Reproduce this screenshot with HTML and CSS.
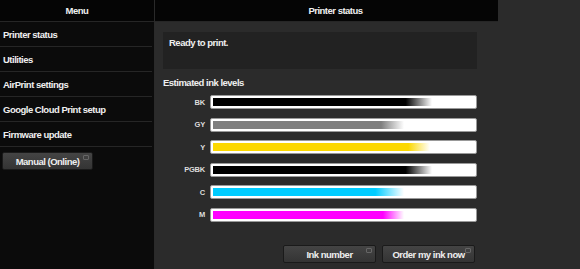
FILE: index.html
```html
<!doctype html>
<html>
  <head>
    <meta charset="utf8">
    <title>Printer status</title>
    <link rel="stylesheet" href="styles.css">
  </head>
  <body>
    <nav class="side">
      <h2 class="bar">Menu</h2>
      <ul class="menu">
        <li>Printer status</li>
        <li>Utilities</li>
        <li>AirPrint settings</li>
        <li>Google Cloud Print setup</li>
        <li>Firmware update</li>
      </ul>
      <a class="btn manual">Manual (Online)<i class="ext"></i></a>
    </nav>
    <main>
      <h1 class="bar">Printer status</h1>
      <div class="content">
        <div class="status">Ready to print.</div>
        <h3>Estimated ink levels</h3>
        <div class="inks">
          <div class="ink"><span>BK</span><div class="meter"><div class="fill bk" style="width:84%"></div></div></div>
          <div class="ink"><span>GY</span><div class="meter"><div class="fill gy" style="width:73%"></div></div></div>
          <div class="ink"><span>Y</span><div class="meter"><div class="fill y" style="width:83%"></div></div></div>
          <div class="ink"><span>PGBK</span><div class="meter"><div class="fill bk" style="width:84%"></div></div></div>
          <div class="ink"><span>C</span><div class="meter"><div class="fill c" style="width:73%"></div></div></div>
          <div class="ink"><span>M</span><div class="meter"><div class="fill m" style="width:73%"></div></div></div>
        </div>
        <div class="actions">
          <a class="btn">Ink number<i class="ext"></i></a>
          <a class="btn">Order my ink now<i class="ext"></i></a>
        </div>
      </div>
    </main>
  </body>
</html>
```

FILE: styles.css
```css
html, body { margin: 0; padding: 0; height: 100%; }
body { display: flex; background: #2b2b2b; color: #f0f0f0; font-family: "Liberation Sans", Arial, sans-serif; font-size: 9.5px; letter-spacing: -0.5px; font-weight: bold; overflow: hidden; }

.bar { margin: 0; height: 22px; line-height: 22px; background: #050505; border-bottom: 1px solid #262626; font-size: 9.5px; text-align: center; box-sizing: border-box; }

.side { width: 154px; background: #0b0b0b; border-right: 1px solid #2a2a2a; flex: none; }
.menu { list-style: none; margin: 0; padding: 0 2px 0 0; }
.menu li { height: 25px; line-height: 25px; padding-left: 3px; border-bottom: 1px solid #262626; box-sizing: border-box; }

.btn { position: relative; display: inline-block; height: 18px; line-height: 17px; text-align: center; color: #eee; background: linear-gradient(#444, #343434); border: 1px solid #1a1a1a; border-radius: 2px; box-sizing: border-box; }
.ext { position: absolute; top: 2px; right: 3px; width: 4px; height: 3px; border: 1px solid #666; border-radius: 1px; }
.manual { width: 91px; margin: 5px 0 0 2px; }

main { flex: 1; display: flex; flex-direction: column; }
main .bar { width: 343px; padding-left: 18px; }
.content { padding: 10px 0 0 8px; width: 314px; }
.status { height: 37px; background: #222; padding: 5px 6px; box-sizing: border-box; }
h3 { margin: 7px 0 0; font-size: 9.5px; line-height: 14px; }

.inks { display: flex; flex-direction: column; gap: 8.6px; margin-top: 5px; }
.ink { display: flex; align-items: center; }
.ink span { width: 47px; padding-right: 5px; box-sizing: border-box; text-align: right; font-size: 7.5px; letter-spacing: -0.2px; color: #ddd; }
.meter { flex: 1; height: 14px; background: #fff; border: 1px solid #999; border-radius: 2px; padding: 2px; box-sizing: border-box; }
.fill { height: 100%; }
.fill.bk { background: linear-gradient(to right, #000 88%, #fff); }
.fill.gy { background: linear-gradient(to right, #7f7f7f 88%, #fff); }
.fill.y { background: linear-gradient(to right, #fcd800 90%, #fff); }
.fill.c { background: linear-gradient(to right, #00ccff 85%, #fff); }
.fill.m { background: linear-gradient(to right, #ff00ff 89%, #fff); }

.actions { display: flex; justify-content: flex-end; gap: 6px; margin-top: 23px; padding-right: 2px; }
.actions .btn { width: 93px; }
```
